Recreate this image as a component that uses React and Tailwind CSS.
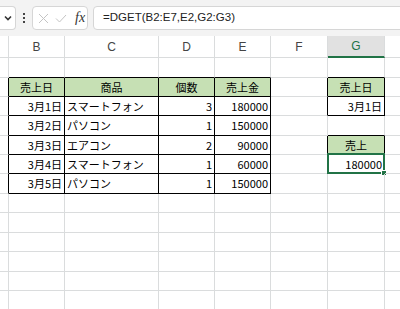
import React from 'react'

const colWidths = ['w-[9px]', 'w-[56px]', 'w-[94px]', 'w-[56px]', 'w-[56px]', 'w-[57px]', 'w-[57px]', 'w-[30px]']
const colLetters = ['', 'B', 'C', 'D', 'E', 'F', 'G', '']
const rowHeights = ['h-[20px]', 'h-[19px]', 'h-[19px]', 'h-[20px]', 'h-[19px]', 'h-[19px]', 'h-[20px]', 'h-[19px]', 'h-[20px]', 'h-[19px]', 'h-[20px]', 'h-[19px]', 'h-[19px]']

// cell contents, keyed by "row-col" (row 1 based, col index into colWidths)
const cells = {
  '2-1': { v: '売上日', a: 'c', h: true },
  '2-2': { v: '商品', a: 'c', h: true },
  '2-3': { v: '個数', a: 'c', h: true },
  '2-4': { v: '売上金', a: 'c', h: true },
  '2-6': { v: '売上日', a: 'c', h: true },
  '3-1': { v: '3月1日', a: 'r' },
  '3-2': { v: 'スマートフォン', a: 'l' },
  '3-3': { v: '3', a: 'r' },
  '3-4': { v: '180000', a: 'r' },
  '3-6': { v: '3月1日', a: 'r' },
  '4-1': { v: '3月2日', a: 'r' },
  '4-2': { v: 'パソコン', a: 'l' },
  '4-3': { v: '1', a: 'r' },
  '4-4': { v: '150000', a: 'r' },
  '5-1': { v: '3月3日', a: 'r' },
  '5-2': { v: 'エアコン', a: 'l' },
  '5-3': { v: '2', a: 'r' },
  '5-4': { v: '90000', a: 'r' },
  '5-6': { v: '売上', a: 'c', h: true },
  '6-1': { v: '3月4日', a: 'r' },
  '6-2': { v: 'スマートフォン', a: 'l' },
  '6-3': { v: '1', a: 'r' },
  '6-4': { v: '60000', a: 'r' },
  '6-6': { v: '180000', a: 'r', sel: true },
  '7-1': { v: '3月5日', a: 'r' },
  '7-2': { v: 'パソコン', a: 'l' },
  '7-3': { v: '1', a: 'r' },
  '7-4': { v: '150000', a: 'r' },
}

function inTable(r, c) {
  if (r >= 2 && r <= 7 && c >= 1 && c <= 4) return true
  if (c === 6 && (r === 2 || r === 3 || r === 5 || r === 6)) return true
  return false
}

function Cell({ r, c }) {
  const data = cells[`${r}-${c}`]
  const right = inTable(r, c) || inTable(r, c + 1) ? 'border-r-black' : 'border-r-[#dadcdd]'
  const bottom = inTable(r, c) || inTable(r + 1, c) ? 'border-b-black' : 'border-b-[#dadcdd]'
  const align = !data ? '' : data.a === 'c' ? 'justify-center' : data.a === 'r' ? 'justify-end pr-[2px]' : 'justify-start pl-[2px]'
  return (
    <div className={`relative shrink-0 flex items-center border-r border-b ${right} ${bottom} ${colWidths[c]} ${align} ${data && data.h ? 'bg-[#c6e0b4]' : ''}`}>
      {data && <span className="whitespace-nowrap text-black">{data.v}</span>}
      {data && data.sel && (
        <>
          <div className="absolute -left-px -top-[2px] -right-px -bottom-px border-2 border-[#217346]" />
          <div className="absolute -right-[3px] -bottom-[3px] w-[6px] h-[6px] bg-[#217346] border border-white" />
        </>
      )}
    </div>
  )
}

export default function App() {
  return (
    <div className="w-[400px] h-[309px] overflow-hidden bg-white" style={{ fontFamily: '"Noto Sans CJK JP", sans-serif' }}>
      {/* Formula bar */}
      <div className="h-[36px] bg-[#f3f3f3] flex items-center overflow-hidden">
        <div className="w-[16px] h-[24px] shrink-0 bg-white border border-l-0 border-[#d6d6d6] rounded-r-[4px] flex items-center justify-center">
          <svg width="8" height="6" viewBox="0 0 8 6">
            <path d="M1 1.5 L4 4.5 L7 1.5" fill="none" stroke="#333" strokeWidth="1.6" />
          </svg>
        </div>
        <div className="w-[16px] shrink-0 flex flex-col items-center gap-[2px]">
          <span className="w-[2px] h-[2px] bg-[#444]" />
          <span className="w-[2px] h-[2px] bg-[#444]" />
          <span className="w-[2px] h-[2px] bg-[#444]" />
        </div>
        <div className="w-[56px] h-[24px] shrink-0 bg-white border border-[#d6d6d6] rounded-[4px] flex items-center pl-[4px]">
          <svg width="11" height="11" viewBox="0 0 11 11" className="ml-[1px]">
            <path d="M1 1 L10 10 M10 1 L1 10" stroke="#c4c4c4" strokeWidth="1" fill="none" />
          </svg>
          <svg width="12" height="9" viewBox="0 0 12 9" className="ml-[6px]">
            <path d="M1 4.5 L4.5 8 L11 1" stroke="#c4c4c4" strokeWidth="1" fill="none" />
          </svg>
          <span className="ml-[8px] text-[14px] italic text-[#333] leading-none" style={{ fontFamily: '"Liberation Serif", serif' }}>fx</span>
        </div>
        <div className="ml-[5px] h-[24px] flex-1 min-w-[320px] bg-white border border-[#d6d6d6] rounded-[4px] flex items-center pl-[9px]">
          <span className="text-[11.5px] text-[#222] whitespace-nowrap" style={{ fontFamily: '"Liberation Sans", sans-serif' }}>=DGET(B2:E7,E2,G2:G3)</span>
        </div>
      </div>

      {/* Column headers */}
      <div className="h-[22px] flex">
        {colWidths.map((w, c) => (
          <div
            key={c}
            className={`shrink-0 ${w} flex items-center justify-center border-r border-b text-[12px] ${c === 6 ? 'bg-[#e1e1e1] border-r-[#dadcdd] border-b-2 border-b-[#217346] text-[#217346]' : 'border-[#dadcdd] text-[#444]'}`}
            style={{ fontFamily: '"Liberation Sans", sans-serif' }}
          >
            {colLetters[c]}
          </div>
        ))}
      </div>

      {/* Grid */}
      <div className="text-[11px]">
        {rowHeights.map((h, i) => (
          <div key={i} className={`flex ${h}`}>
            {colWidths.map((_, c) => (
              <Cell key={c} r={i + 1} c={c} />
            ))}
          </div>
        ))}
      </div>
    </div>
  )
}
